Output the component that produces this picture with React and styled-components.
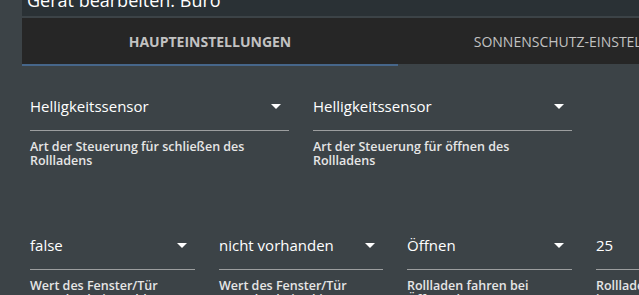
import React from "react";
import styled, { createGlobalStyle } from "styled-components";

const GlobalStyle = createGlobalStyle`
  html, body { margin: 0; padding: 0; }
  body {
    background: #3c4347;
    font-family: "Open Sans", "Noto Sans", sans-serif;
    color: #ffffff;
    overflow: hidden;
  }
`;

const Page = styled.div`
  display: flex;
  align-items: flex-start;
  padding-left: 22px;
  width: 639px;
  height: 295px;
  box-sizing: border-box;
  overflow: hidden;
`;

const Main = styled.div`
  flex: 1;
  min-width: 0;
`;

const TitleBar = styled.div`
  height: 16px;
  background: #2a3135;
  overflow: hidden;
  padding-left: 5px;
`;

const Title = styled.div`
  font-size: 18px;
  line-height: 20px;
  margin-top: -10px;
  white-space: nowrap;
  color: #ffffff;
`;

const TabBar = styled.div`
  margin-top: 2px;
  display: flex;
  white-space: nowrap;
`;

const Tab = styled.div`
  flex: 0 0 376px;
  height: 46px;
  background: #262626;
  background-clip: padding-box;
  border-bottom: 2px solid ${(p) => (p.$active ? "#46668a" : "transparent")};
  display: flex;
  align-items: center;
  justify-content: center;
  font-size: 14px;
  font-weight: ${(p) => (p.$active ? 700 : 400)};
  color: #c2c2c2;
`;

const Section = styled.div`
  display: flex;
  gap: 24px;
  padding: 0 0 0 8px;
  margin-top: ${(p) => p.$top}px;
  white-space: nowrap;
`;

const Field = styled.div`
  flex: 0 0 ${(p) => p.$width}px;
  display: flex;
  flex-direction: column;
`;

const Select = styled.div`
  height: 49px;
  display: flex;
  align-items: center;
  justify-content: space-between;
  border-bottom: 1px solid #9c9e9f;
  box-sizing: border-box;
`;

const Value = styled.span`
  font-size: 15px;
  color: #ffffff;
`;

const Arrow = styled.span`
  width: 0;
  height: 0;
  border-left: 5px solid transparent;
  border-right: 5px solid transparent;
  border-top: 5px solid #ffffff;
  margin-right: 8px;
`;

const Help = styled.div`
  margin-top: 9px;
  font-size: 12.5px;
  font-weight: 600;
  line-height: 14px;
  color: #e6e6e6;
  white-space: normal;
`;

function SelectField({ width, value, help, arrow = true }) {
  return (
    <Field $width={width}>
      <Select>
        <Value>{value}</Value>
        {arrow && <Arrow />}
      </Select>
      <Help>{help}</Help>
    </Field>
  );
}

export default function App() {
  return (
    <>
      <GlobalStyle />
      <Page>
        <Main>
          <TitleBar>
            <Title>Gerät bearbeiten: Büro</Title>
          </TitleBar>
          <TabBar>
            <Tab $active>HAUPTEINSTELLUNGEN</Tab>
            <Tab>SONNENSCHUTZ-EINSTELLUNGEN</Tab>
          </TabBar>
          <Section $top={16}>
            <SelectField
              width={259}
              value="Helligkeitssensor"
              help={<>Art der Steuerung für schließen des<br />Rollladens</>}
            />
            <SelectField
              width={259}
              value="Helligkeitssensor"
              help={<>Art der Steuerung für öffnen des<br />Rollladens</>}
            />
          </Section>
          <Section $top={53}>
            <SelectField
              width={165}
              value="false"
              help={<>Wert des Fenster/Tür<br />Kontakts bei geschlossen</>}
            />
            <SelectField
              width={164}
              value="nicht vorhanden"
              help={<>Wert des Fenster/Tür<br />Kontakts bei gekippt</>}
            />
            <SelectField
              width={165}
              value="Öffnen"
              help={<>Rollladen fahren bei<br />Öffnen des Fensters</>}
            />
            <SelectField
              width={165}
              value="25"
              arrow={false}
              help={<>Rollladen Lüftungsposition<br />in Prozent</>}
            />
          </Section>
        </Main>
      </Page>
    </>
  );
}
